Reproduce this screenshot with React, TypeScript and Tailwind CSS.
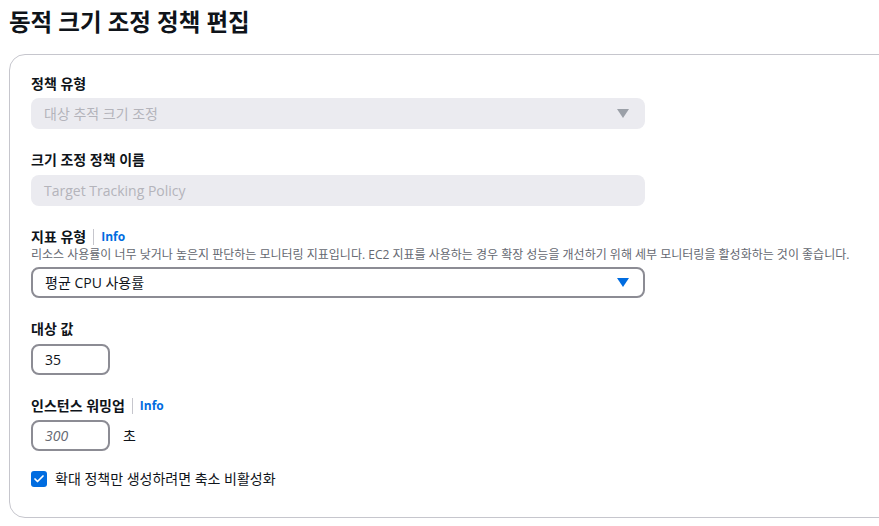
import { Check } from "lucide-react";

const font = { fontFamily: '"Open Sans", "Noto Sans CJK KR", sans-serif' };

function Caret({ color }: { color: string }) {
  return (
    <svg width="12" height="9" viewBox="0 0 12 9" className="shrink-0">
      <path d="M0 0 L12 0 L6 9 Z" fill={color} />
    </svg>
  );
}

function Label({ text, info }: { text: string; info?: boolean }) {
  return (
    <div className="flex items-center h-5 text-[14px] font-bold text-[#0f141a] leading-5">
      <span>{text}</span>
      {info && (
        <>
          <span className="mx-[7px] h-[16px] w-px bg-[#c6c6cd]" />
          <span className="text-[12px] text-[#006ce0]">Info</span>
        </>
      )}
    </div>
  );
}

export default function App() {
  return (
    <div className="bg-white w-[879px] h-[526px] overflow-hidden" style={font}>
      <h1 className="pl-[9px] pt-[6px] text-[23.5px] font-bold leading-8 text-[#0f141a]">동적 크기 조정 정책 편집</h1>

      <div className="mt-[16px] ml-[9px] w-[900px] h-[464px] rounded-[16px] border border-[#c6c6cd] pl-[21px] pt-[19px]">
        <div className="w-[614px]">
          {/* 정책 유형 */}
          <Label text="정책 유형" />
          <div className="mt-[4px] h-[31px] rounded-[8px] bg-[#ebebf0] flex items-center justify-between pl-[13px] pr-[16px] text-[14px] text-[#b4b4bb]">
            <span>대상 추적 크기 조정</span>
            <Caret color="#9ba0a8" />
          </div>

          {/* 크기 조정 정책 이름 */}
          <div className="mt-[21px]">
            <Label text="크기 조정 정책 이름" />
          </div>
          <div className="mt-[5px] h-[31px] rounded-[8px] bg-[#ebebf0] flex items-center pl-[13px] text-[14px] text-[#b4b4bb]">
            Target Tracking Policy
          </div>

          {/* 지표 유형 */}
          <div className="mt-[21px]">
            <Label text="지표 유형" info />
          </div>
          <p className="text-[12px] leading-4 text-[#656871] whitespace-nowrap">
            리소스 사용률이 너무 낮거나 높은지 판단하는 모니터링 지표입니다. EC2 지표를 사용하는 경우 확장 성능을 개선하기 위해 세부 모니터링을 활성화하는 것이 좋습니다.
          </p>
          <div className="mt-[4px] h-[31px] rounded-[8px] border-2 border-[#8c8c94] flex items-center justify-between pl-[12px] pr-[14px] text-[14px] text-[#0f141a]">
            <span>평균 CPU 사용률</span>
            <Caret color="#006ce0" />
          </div>

          {/* 대상 값 */}
          <div className="mt-[21px]">
            <Label text="대상 값" />
          </div>
          <div className="mt-[5px] w-[79px] h-[31px] rounded-[8px] border-2 border-[#8c8c94] flex items-center pl-[12px] text-[14px] text-[#0f141a]">
            35
          </div>

          {/* 인스턴스 워밍업 */}
          <div className="mt-[21px]">
            <Label text="인스턴스 워밍업" info />
          </div>
          <div className="mt-[4px] flex items-center gap-[13px]">
            <div className="w-[79px] h-[31px] rounded-[8px] border-2 border-[#8c8c94] flex items-center pl-[12px] text-[14px] italic text-[#656871]">
              300
            </div>
            <span className="text-[14px] text-[#0f141a]">초</span>
          </div>

          {/* 체크박스 */}
          <div className="mt-[17px] flex items-center gap-[8px]">
            <div className="w-[16px] h-[16px] rounded-[3px] bg-[#006ce0] flex items-center justify-center">
              <Check size={12} strokeWidth={3.5} color="white" />
            </div>
            <span className="text-[14px] text-[#0f141a]">확대 정책만 생성하려면 축소 비활성화</span>
          </div>
        </div>
      </div>
    </div>
  );
}
